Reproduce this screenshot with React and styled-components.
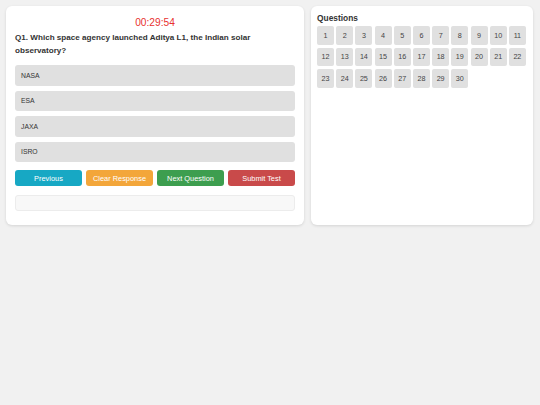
import React, { useState } from "react";
import styled, { createGlobalStyle } from "styled-components";

const GlobalStyle = createGlobalStyle`
  html, body {
    margin: 0;
    padding: 0;
    background: #f1f1f1;
    font-family: "Liberation Sans", Arial, sans-serif;
  }
`;

const options = ["NASA", "ESA", "JAXA", "ISRO"];
const questionNumbers = Array.from({ length: 30 }, (_, i) => i + 1);

function App() {
  const [selected, setSelected] = useState(null);

  return (
    <>
      <GlobalStyle />
      <Page>
        <QuizCard>
          <Timer>00:29:54</Timer>
          <Question>
            Q1. Which space agency launched Aditya L1, the Indian solar
            observatory?
          </Question>
          <OptionList>
            {options.map((opt, i) => (
              <Option
                key={opt}
                $active={selected === i}
                onClick={() => setSelected(i)}
              >
                {opt}
              </Option>
            ))}
          </OptionList>
          <ButtonRow>
            <ActionButton $color="#17a8c4">Previous</ActionButton>
            <ActionButton $color="#f3a63a">Clear Response</ActionButton>
            <ActionButton $color="#3d9e4f">Next Question</ActionButton>
            <ActionButton $color="#c94a4a">Submit Test</ActionButton>
          </ButtonRow>
          <StatusBox />
        </QuizCard>
        <NavCard>
          <NavTitle>Questions</NavTitle>
          <NumberGrid>
            {questionNumbers.map((n) => (
              <NumberButton key={n}>{n}</NumberButton>
            ))}
          </NumberGrid>
        </NavCard>
      </Page>
    </>
  );
}

export default App;

const Page = styled.div`
  display: flex;
  align-items: flex-start;
  gap: 7px;
  padding: 6px 7px 6px 6px;
`;

const Card = styled.div`
  background: #fff;
  border-radius: 6px;
  box-shadow: 0 1px 3px rgba(0, 0, 0, 0.12);
  box-sizing: border-box;
  height: 219px;
`;

const QuizCard = styled(Card)`
  flex: 4;
  padding: 9px 9px 16px 9px;
`;

const NavCard = styled(Card)`
  flex: 3;
  padding: 7px 6px;
`;

const Timer = styled.div`
  text-align: center;
  color: #e8312f;
  font-size: 10.2px;
  line-height: 14px;
  margin-top: 1px;
`;

const Question = styled.div`
  font-weight: bold;
  font-size: 8.1px;
  line-height: 13px;
  color: #333;
  margin-top: 1px;
`;

const OptionList = styled.div`
  display: flex;
  flex-direction: column;
  gap: 5px;
  margin-top: 8px;
`;

const Option = styled.div`
  background: ${(p) => (p.$active ? "#cfe3f7" : "#e0e0e0")};
  border-radius: 3px;
  height: 20.5px;
  display: flex;
  align-items: center;
  padding-left: 6px;
  font-size: 6.8px;
  color: #333;
  cursor: pointer;
`;

const ButtonRow = styled.div`
  display: grid;
  grid-template-columns: repeat(4, 1fr);
  gap: 4px;
  margin-top: 8px;
`;

const ActionButton = styled.button`
  background: ${(p) => p.$color};
  color: #fff;
  border: none;
  border-radius: 3px;
  height: 16px;
  padding: 0;
  font-family: "Liberation Sans", Arial, sans-serif;
  font-size: 7.4px;
  cursor: pointer;
`;

const StatusBox = styled.div`
  margin-top: 9px;
  height: 14px;
  background: #f8f8f8;
  border: 1px solid #ececec;
  border-radius: 3px;
`;

const NavTitle = styled.div`
  font-weight: bold;
  font-size: 8.4px;
  color: #333;
  line-height: 10px;
  margin-bottom: 3px;
`;

const NumberGrid = styled.div`
  display: flex;
  flex-wrap: wrap;
  gap: 3px 2.2px;
`;

const NumberButton = styled.div`
  width: 17px;
  height: 18.5px;
  background: #e0e0e0;
  border-radius: 2px;
  display: flex;
  align-items: center;
  justify-content: center;
  font-size: 7.2px;
  color: #444;
  cursor: pointer;
`;
